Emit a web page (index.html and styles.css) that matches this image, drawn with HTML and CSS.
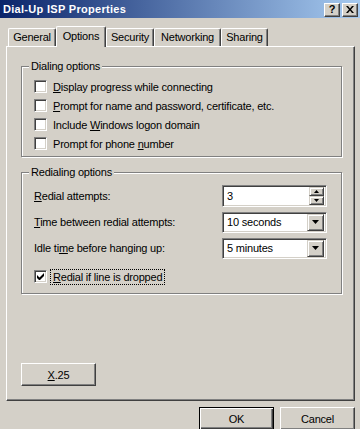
FILE: index.html
```html
<!DOCTYPE html>
<html>
<head>
<meta charset="utf-8">
<link rel="stylesheet" href="styles.css">
</head>
<body>
<div class="window">
  <div class="titlebar">
    <span class="title">Dial-Up ISP Properties</span>
    <div class="caption-btns">
      <span class="cbtn">?</span>
      <span class="cbtn close">
        <svg width="8" height="7" viewBox="0 0 8 7"><path d="M0 0h2l2 2.5L6 0h2L5 3.5 8 7H6L4 4.5 2 7H0l3-3.5z" fill="#000"/></svg>
      </span>
    </div>
  </div>
  <div class="body">
    <div class="tabs">
      <div class="tab t-general">General</div>
      <div class="tab t-options active">Options</div>
      <div class="tab t-security">Security</div>
      <div class="tab t-networking">Networking</div>
      <div class="tab t-sharing">Sharing</div>
    </div>
    <div class="panel">
      <div class="group g-dial">
        <span class="legend">Dialing options</span>
        <label class="check"><span class="box"></span><span><u>D</u>isplay progress while connecting</span></label>
        <label class="check"><span class="box"></span><span><u>P</u>rompt for name and password, certificate, etc.</span></label>
        <label class="check"><span class="box"></span><span>Include <u>W</u>indows logon domain</span></label>
        <label class="check"><span class="box"></span><span>Prompt for phone <u>n</u>umber</span></label>
      </div>
      <div class="group g-redial">
        <span class="legend">Redialing options</span>
        <div class="row">
          <span class="lbl"><u>R</u>edial attempts:</span>
          <div class="field spin">
            <span class="val">3</span>
            <div class="spinbtns">
              <span class="sb"><svg width="5" height="3" viewBox="0 0 5 3"><path d="M2.5 0L5 3H0z" fill="#000"/></svg></span>
              <span class="sb"><svg width="5" height="3" viewBox="0 0 5 3"><path d="M0 0h5L2.5 3z" fill="#000"/></svg></span>
            </div>
          </div>
        </div>
        <div class="row">
          <span class="lbl"><u>T</u>ime between redial attempts:</span>
          <div class="field combo">
            <span class="val">10 seconds</span>
            <span class="dd"><svg width="7" height="4" viewBox="0 0 7 4"><path d="M0 0h7L3.5 4z" fill="#000"/></svg></span>
          </div>
        </div>
        <div class="row">
          <span class="lbl">Idle ti<u>m</u>e before hanging up:</span>
          <div class="field combo">
            <span class="val">5 minutes</span>
            <span class="dd"><svg width="7" height="4" viewBox="0 0 7 4"><path d="M0 0h7L3.5 4z" fill="#000"/></svg></span>
          </div>
        </div>
        <label class="check checked"><span class="box"><svg width="7" height="7" viewBox="0 0 7 7"><path d="M0 2v3l2 2h1l4-4V0L2.5 4.5z" fill="#000"/></svg></span><span class="focus"><u>R</u>edial if line is dropped</span></label>
      </div>
      <div class="x25row">
        <button class="btn x25"><u>X</u>.25</button>
      </div>
    </div>
    <div class="footer">
      <button class="btn ok">OK</button>
      <button class="btn cancel">Cancel</button>
    </div>
  </div>
</div>
</body>
</html>
```
FILE: styles.css
```css
html, body {
  margin: 0;
  padding: 0;
  background: #d4d0c8;
}
body {
  width: 360px;
  height: 429px;
  overflow: hidden;
  font-family: "Liberation Sans", Arial, sans-serif;
  font-size: 11px;
  letter-spacing: -0.2px;
  color: #000;
}
.window {
  display: flex;
  flex-direction: column;
  width: 360px;
  height: 429px;
}
.titlebar {
  height: 18px;
  background: linear-gradient(to right, #0a246a, #a6caf0);
  display: flex;
  align-items: center;
  justify-content: space-between;
  padding: 0 2px 0 3px;
  flex-shrink: 0;
}
.title {
  color: #fff;
  font-weight: bold;
  font-size: 11px;
  letter-spacing: 0.3px;
}
.caption-btns {
  display: flex;
  gap: 2px;
  margin-top: 1px;
}
.cbtn {
  width: 16px;
  height: 14px;
  box-sizing: border-box;
  background: #d4d0c8;
  border-top: 1px solid #fff;
  border-left: 1px solid #fff;
  border-right: 1px solid #404040;
  border-bottom: 1px solid #404040;
  box-shadow: inset -1px -1px 0 #808080;
  display: flex;
  align-items: center;
  justify-content: center;
  font-weight: bold;
  font-size: 11px;
  line-height: 1;
  padding-bottom: 1px;
}
.close svg { display: block; margin-left: -1px; }
.body {
  padding: 0 5px 0 6px;
  display: flex;
  flex-direction: column;
}
.tabs {
  display: flex;
  align-items: flex-end;
  margin-top: 8px;
  padding-left: 2px;
  height: 20px;
  position: relative;
  z-index: 2;
}
.tab {
  box-sizing: border-box;
  height: 18px;
  border-top: 1px solid #fff;
  border-left: 1px solid #fff;
  border-right: 1px solid #404040;
  box-shadow: inset -1px 0 0 #808080;
  border-radius: 2px 2px 0 0;
  padding-top: 2px;
  text-align: center;
  background: #d4d0c8;
  white-space: nowrap;
}
.t-general { width: 48px; }
.t-options { width: 50px; }
.t-security { width: 48px; }
.t-networking { width: 67px; }
.t-sharing { width: 47px; }
.tab.active {
  height: 21px;
  margin-bottom: -1px;
  padding-top: 3px;
}
.panel {
  box-sizing: border-box;
  width: 349px;
  height: 355px;
  border-top: 1px solid #fff;
  border-left: 1px solid #fff;
  border-right: 1px solid #404040;
  border-bottom: 1px solid #404040;
  box-shadow: inset -1px -1px 0 #808080;
  padding: 19px 0 0 14px;
  display: flex;
  flex-direction: column;
}
.group {
  position: relative;
  box-sizing: border-box;
  width: 321px;
  border: 1px solid #808080;
  box-shadow: inset 1px 1px 0 #fff, 1px 1px 0 #fff;
  display: flex;
  flex-direction: column;
}
.legend {
  position: absolute;
  top: -7px;
  left: 7px;
  padding: 0 2px;
  background: #d4d0c8;
  line-height: 13px;
}
.g-dial {
  height: 91px;
  padding: 13px 0 0 12px;
  gap: 6px;
}
.g-redial {
  height: 122px;
  margin-top: 15px;
  padding: 12px 0 0 12px;
}
.check {
  display: flex;
  align-items: center;
  gap: 6px;
  height: 13px;
  white-space: nowrap;
}
.box {
  width: 13px;
  height: 13px;
  box-sizing: border-box;
  background: #fff;
  border-top: 1px solid #808080;
  border-left: 1px solid #808080;
  border-right: 1px solid #fff;
  border-bottom: 1px solid #fff;
  box-shadow: inset 1px 1px 0 #404040, inset -1px -1px 0 #d4d0c8;
  flex-shrink: 0;
  display: flex;
  align-items: center;
  justify-content: center;
}
.box svg { display: block; }
.row {
  display: flex;
  align-items: center;
  justify-content: space-between;
  width: 293px;
  height: 22px;
  margin-bottom: 4px;
}
.field {
  box-sizing: border-box;
  width: 105px;
  height: 22px;
  background: #fff;
  border-top: 1px solid #808080;
  border-left: 1px solid #808080;
  border-right: 1px solid #fff;
  border-bottom: 1px solid #fff;
  box-shadow: inset 1px 1px 0 #404040, inset -1px -1px 0 #d4d0c8;
  display: flex;
  align-items: center;
  justify-content: space-between;
  padding: 2px 2px 2px 4px;
}
.combo { height: 21px; }
.spinbtns {
  display: flex;
  flex-direction: column;
  width: 15px;
  height: 18px;
}
.sb, .dd {
  box-sizing: border-box;
  background: #d4d0c8;
  border-top: 1px solid #d4d0c8;
  border-left: 1px solid #d4d0c8;
  border-right: 1px solid #404040;
  border-bottom: 1px solid #404040;
  box-shadow: inset 1px 1px 0 #fff, inset -1px -1px 0 #808080;
  display: flex;
  align-items: center;
  justify-content: center;
}
.sb { height: 9px; width: 15px; }
.sb svg { display: block; }
.dd { width: 17px; height: 17px; }
.dd svg { display: block; }
.checked { margin-top: 7px; }
.focus {
  outline: 1px dotted #000;
  outline-offset: 1px;
  padding: 0 1px;
  margin-left: -1px;
}
.x25row {
  margin-top: 69px;
}
.btn {
  font-family: "Liberation Sans", Arial, sans-serif;
  font-size: 11px;
  letter-spacing: -0.2px;
  color: #000;
  background: #d4d0c8;
  box-sizing: border-box;
  border-top: 1px solid #fff;
  border-left: 1px solid #fff;
  border-right: 1px solid #404040;
  border-bottom: 1px solid #404040;
  box-shadow: inset -1px -1px 0 #808080;
  padding: 0;
  margin: 0;
}
.x25 {
  width: 75px;
  height: 23px;
}
.footer {
  display: flex;
  justify-content: flex-end;
  gap: 6px;
  margin-top: 6px;
  padding-right: 0;
}
.ok, .cancel {
  width: 75px;
  height: 23px;
}
.ok {
  border: 1px solid #000;
  box-shadow: inset 1px 1px 0 #fff, inset -1px -1px 0 #404040, inset -2px -2px 0 #808080;
}
```
